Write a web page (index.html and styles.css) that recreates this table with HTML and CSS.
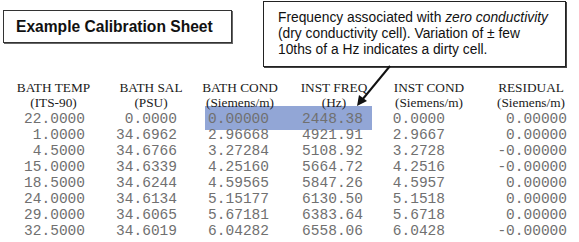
FILE: index.html
```html
<!DOCTYPE html>
<html>
<head>
<meta charset="utf-8">
<link rel="stylesheet" href="styles.css">
</head>
<body>
<div class="page">
  <div class="top">
    <div class="title">Example Calibration Sheet</div>
    <div class="callout">Frequency associated with <i>zero conductivity</i><br>(dry conductivity cell). Variation of ± few<br>10ths of a Hz indicates a dirty cell.</div>
  </div>
  <div class="highlight"></div>
  <svg class="arrow" width="579" height="242" viewBox="0 0 579 242">
    <line x1="390" y1="66" x2="362" y2="100" stroke="#111" stroke-width="2"/>
    <polygon points="357,106 359,95 367,101" fill="#111"/>
  </svg>
  <div class="table">
    <div class="col c1">
      <div class="head">BATH TEMP<br>(ITS-90)</div>
      <div class="v">22.0000</div><div class="v">1.0000</div><div class="v">4.5000</div><div class="v">15.0000</div><div class="v">18.5000</div><div class="v">24.0000</div><div class="v">29.0000</div><div class="v">32.5000</div>
    </div>
    <div class="col c2">
      <div class="head">BATH SAL<br>(PSU)</div>
      <div class="v">0.0000</div><div class="v">34.6962</div><div class="v">34.6766</div><div class="v">34.6339</div><div class="v">34.6244</div><div class="v">34.6134</div><div class="v">34.6065</div><div class="v">34.6019</div>
    </div>
    <div class="col c3">
      <div class="head">BATH COND<br>(Siemens/m)</div>
      <div class="v">0.00000</div><div class="v">2.96668</div><div class="v">3.27284</div><div class="v">4.25160</div><div class="v">4.59565</div><div class="v">5.15177</div><div class="v">5.67181</div><div class="v">6.04282</div>
    </div>
    <div class="col c4">
      <div class="head">INST FREQ<br>(Hz)</div>
      <div class="v">2448.38</div><div class="v">4921.91</div><div class="v">5108.92</div><div class="v">5664.72</div><div class="v">5847.26</div><div class="v">6130.50</div><div class="v">6383.64</div><div class="v">6558.06</div>
    </div>
    <div class="col c5">
      <div class="head">INST COND<br>(Siemens/m)</div>
      <div class="v">0.0000</div><div class="v">2.9667</div><div class="v">3.2728</div><div class="v">4.2516</div><div class="v">4.5957</div><div class="v">5.1518</div><div class="v">5.6718</div><div class="v">6.0428</div>
    </div>
    <div class="col c6">
      <div class="head">RESIDUAL<br>(Siemens/m)</div>
      <div class="v">0.00000</div><div class="v">0.00000</div><div class="v">-0.00000</div><div class="v">-0.00000</div><div class="v">0.00000</div><div class="v">0.00000</div><div class="v">0.00000</div><div class="v">-0.00000</div>
    </div>
  </div>
</div>
</body>
</html>
```

FILE: styles.css
```css
html, body {
  margin: 0;
  padding: 0;
  background: #fff;
}
.page {
  position: relative;
  width: 579px;
  height: 242px;
  overflow: hidden;
}
.top {
  display: flex;
  align-items: flex-start;
  height: 80px;
}
.title {
  box-sizing: border-box;
  margin: 10px 0 0 3px;
  width: 229px;
  height: 33px;
  border: 1px solid #333;
  box-shadow: 1px 1px 0 #666;
  font-family: "Liberation Sans", Arial, sans-serif;
  font-weight: bold;
  font-size: 15.6px;
  color: #111;
  display: flex;
  align-items: center;
  padding-left: 12px;
}
.callout {
  box-sizing: border-box;
  margin: 1px 0 0 31px;
  width: 303px;
  height: 66px;
  border: 1px solid #222;
  box-shadow: 1px 1px 0 #444;
  font-family: "Liberation Sans", Arial, sans-serif;
  font-size: 13.8px;
  line-height: 16px;
  color: #111;
  padding: 8px 0 0 14px;
}
.highlight {
  position: absolute;
  left: 205px;
  top: 106px;
  width: 167px;
  height: 24px;
  background: #92a6d6;
}
.arrow {
  position: absolute;
  left: 0;
  top: 0;
  z-index: 2;
}
.table {
  position: relative;
  z-index: 1;
  display: grid;
  grid-template-columns: 107px 88px 90px 98px 92px 92px;
}
.col {
  display: flex;
  flex-direction: column;
}
.head {
  font-family: "Liberation Serif", "Times New Roman", serif;
  font-size: 13.3px;
  line-height: 15px;
  color: #1a1a1a;
  text-align: center;
  height: 31px;
}
.v {
  font-family: "Liberation Mono", "Courier New", monospace;
  font-size: 14.5px;
  line-height: 16px;
  color: #707070;
  text-align: right;
}
.c1 .v { padding-right: 22px; }
.c2 .v { padding-right: 18px; }
.c3 .v { padding-right: 16px; }
.c4 .v { padding-right: 20px; }
.c5 .v { padding-right: 30px; }
.c6 .v { padding-right: 0; }
.c6 .head { padding-left: 20px; }
.c3 .v:first-of-type, .c4 .v:first-of-type { color: #6a7490; }
```
